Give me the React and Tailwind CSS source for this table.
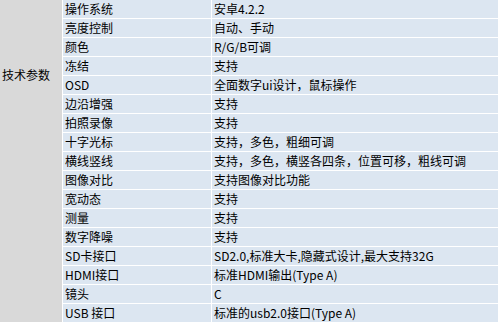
import React from "react";

const rows = [
  ["操作系统", "安卓4.2.2"],
  ["亮度控制", "自动、手动"],
  ["颜色", "R/G/B可调"],
  ["冻结", "支持"],
  ["OSD", "全面数字ui设计，鼠标操作"],
  ["边沿增强", "支持"],
  ["拍照录像", "支持"],
  ["十字光标", "支持，多色，粗细可调"],
  ["横线竖线", "支持，多色，横竖各四条，位置可移，粗线可调"],
  ["图像对比", "支持图像对比功能"],
  ["宽动态", "支持"],
  ["测量", "支持"],
  ["数字降噪", "支持"],
  ["SD卡接口", "SD2.0,标准大卡,隐藏式设计,最大支持32G"],
  ["HDMI接口", "标准HDMI输出(Type A)"],
  ["镜头", "C"],
  ["USB 接口", "标准的usb2.0接口(Type A)"],
];

const App = () => {
  return (
    <div className="w-[498px] h-[329px] bg-white overflow-hidden font-['Noto_Sans_CJK_SC','Liberation_Sans',sans-serif] text-[12px] leading-[18px] text-black">
      <div className="grid grid-cols-[62px_148px_1fr] auto-rows-[18px] gap-px">
        <div className="row-span-17 bg-[#d9d9d9] pl-[2px] pt-[66px]">技术参数</div>
        {rows.map(([name, value]) => (
          <React.Fragment key={name}>
            <div className="bg-[#dce6f1] pl-[2px] whitespace-nowrap">{name}</div>
            <div className="bg-[#dce6f1] pl-[2px] whitespace-nowrap">{value}</div>
          </React.Fragment>
        ))}
      </div>
    </div>
  );
};

export default App;
